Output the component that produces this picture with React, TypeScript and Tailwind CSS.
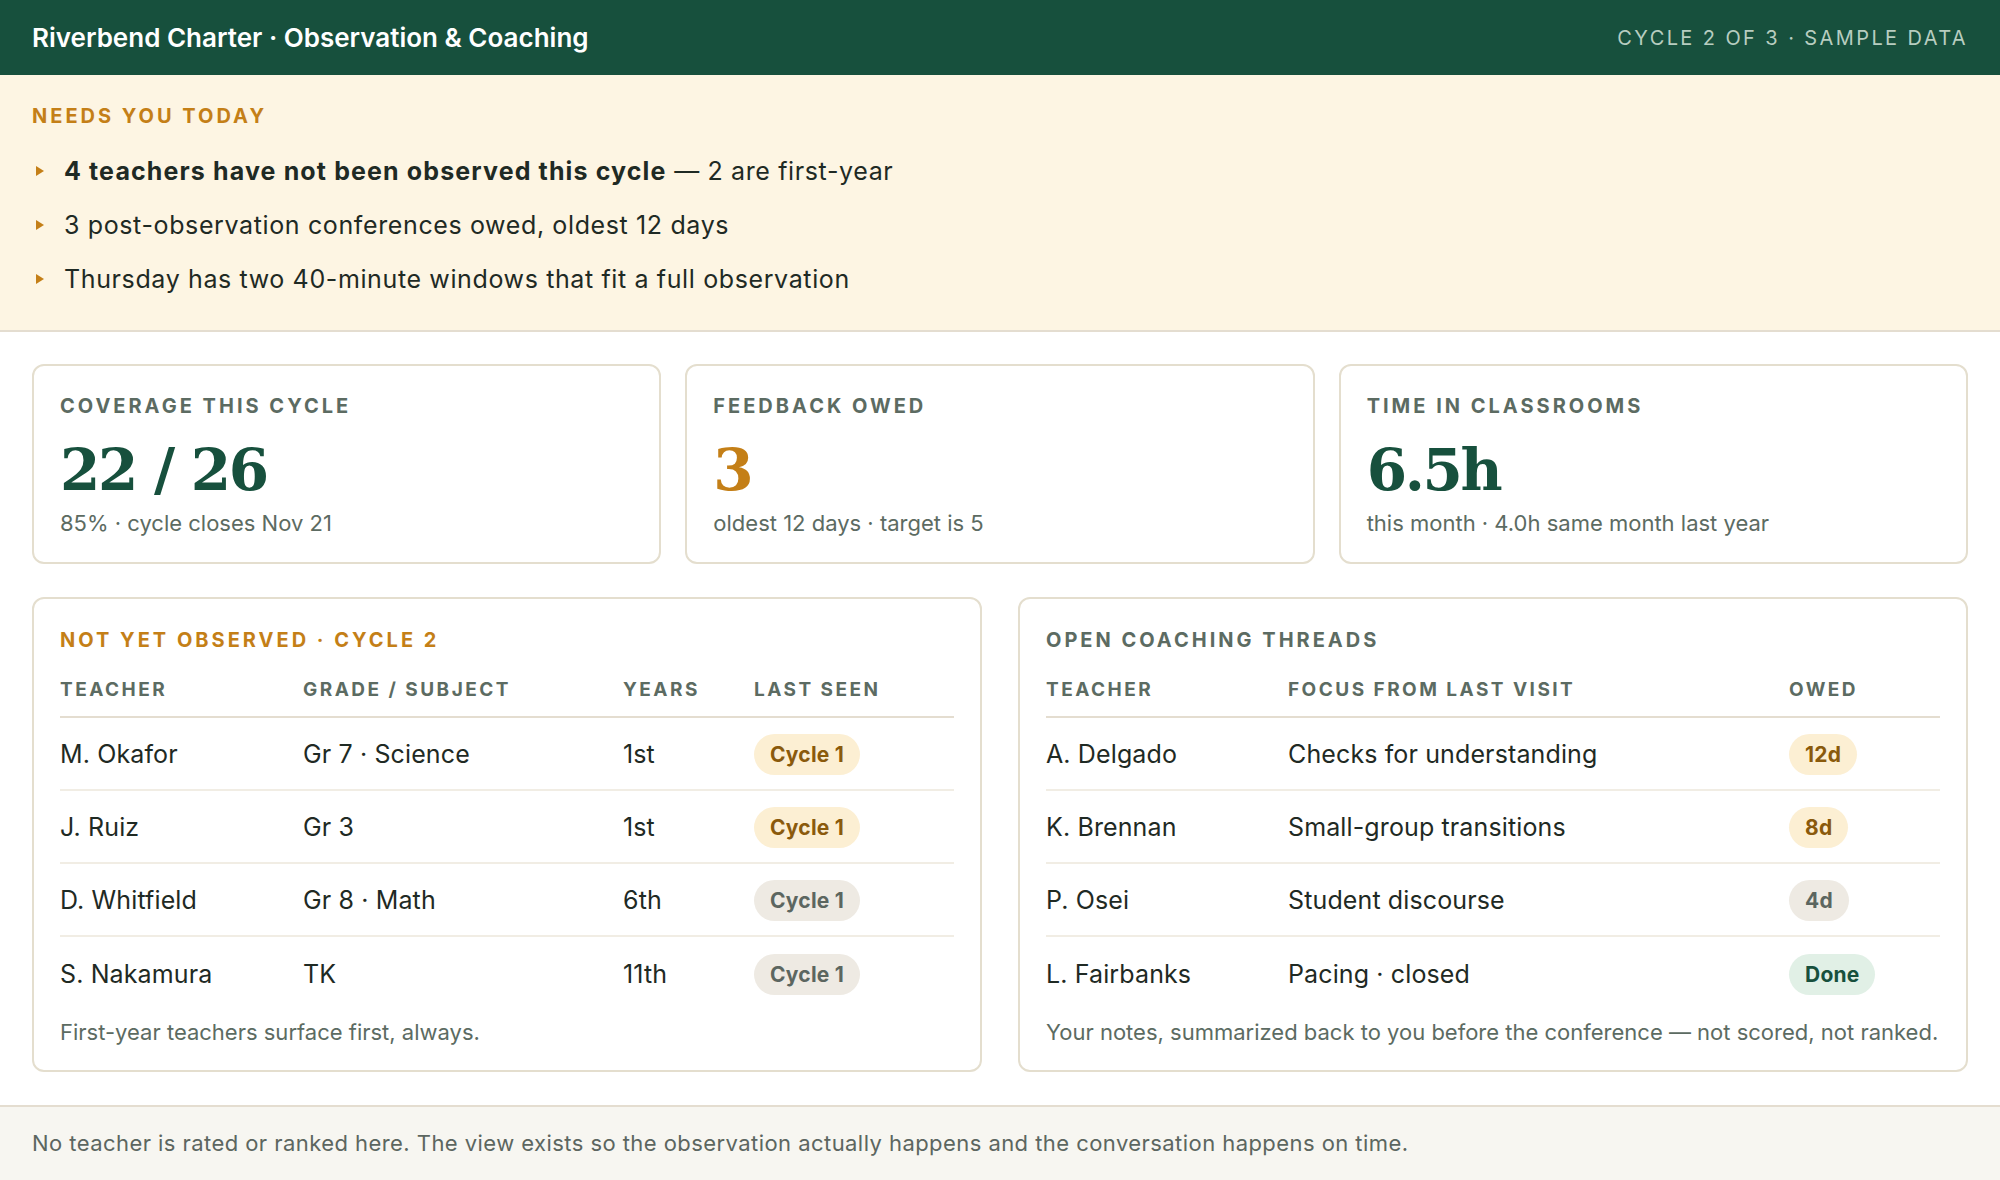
import React from "react";

type Tone = "amber" | "gray" | "green";

const pillTone: Record<Tone, string> = {
  amber: "bg-[#fcefd3] text-[#8a5a0c]",
  gray: "bg-[#eeeae3] text-[#5c6660]",
  green: "bg-[#e1f0e6] text-[#17503d]",
};

function Pill({ tone, children }: { tone: Tone; children: React.ReactNode }) {
  return (
    <span
      className={`inline-flex h-[41px] items-center rounded-full px-[16px] text-[21px] font-bold tracking-[0.01em] ${pillTone[tone]}`}
    >
      {children}
    </span>
  );
}

function Marker() {
  return (
    <span className="flex w-[32px] items-center pl-[4px]">
      <svg width="8" height="10" viewBox="0 0 8 10">
        <polygon points="0,0 8,5 0,10" fill="#c47f17" />
      </svg>
    </span>
  );
}

function StatCard({
  label,
  value,
  valueColor,
  note,
}: {
  label: string;
  value: string;
  valueColor: string;
  note: string;
}) {
  return (
    <div className="flex flex-col rounded-[12px] border-2 border-[#e4dece] bg-white px-[26px] pt-[28px] pb-[25px]">
      <div className="text-[20px] leading-[24px] font-bold tracking-[0.15em] text-[#5c6b62] uppercase">
        {label}
      </div>
      <div
        className={`mt-[20px] text-[58px] leading-[64px] font-bold tracking-[-0.04em] ${valueColor}`}
        style={{ fontFamily: '"DejaVu Serif", "Liberation Serif", serif' }}
      >
        {value}
      </div>
      <div className="mt-[7px] text-[22px] leading-[28px] text-[#5c6b62]">{note}</div>
    </div>
  );
}

const observed = [
  { name: "M. Okafor", grade: "Gr 7 · Science", years: "1st", tone: "amber" as Tone },
  { name: "J. Ruiz", grade: "Gr 3", years: "1st", tone: "amber" as Tone },
  { name: "D. Whitfield", grade: "Gr 8 · Math", years: "6th", tone: "gray" as Tone },
  { name: "S. Nakamura", grade: "TK", years: "11th", tone: "gray" as Tone },
];

const threads = [
  { name: "A. Delgado", focus: "Checks for understanding", owed: "12d", tone: "amber" as Tone },
  { name: "K. Brennan", focus: "Small-group transitions", owed: "8d", tone: "amber" as Tone },
  { name: "P. Osei", focus: "Student discourse", owed: "4d", tone: "gray" as Tone },
  { name: "L. Fairbanks", focus: "Pacing · closed", owed: "Done", tone: "green" as Tone },
];

function TableCard({
  title,
  titleColor,
  cols,
  headers,
  rows,
  note,
}: {
  title: string;
  titleColor: string;
  cols: string;
  headers: string[];
  rows: React.ReactNode[][];
  note: string;
}) {
  return (
    <div className="rounded-[12px] border-2 border-[#e4dece] bg-white px-[26px] pt-[29px] pb-[24px]">
      <div className={`text-[20px] leading-[24px] font-bold tracking-[0.15em] uppercase ${titleColor}`}>
        {title}
      </div>
      <div className={`mt-[26px] grid ${cols} border-b-2 border-[#e4ddd0] pb-[14px]`}>
        {headers.map((h) => (
          <div key={h} className="text-[19px] leading-[24px] font-bold tracking-[0.13em] text-[#5c6b62] uppercase">
            {h}
          </div>
        ))}
      </div>
      {rows.map((cells, i) => (
        <div
          key={i}
          className={`grid ${cols} h-[73px] items-center pt-[2px] text-[25px] tracking-[0.005em] text-[#1f2a24] ${
            i < rows.length - 1 ? "border-b-2 border-[#f1ede4]" : ""
          }`}
        >
          {cells.map((c, j) => (
            <div key={j}>{c}</div>
          ))}
        </div>
      ))}
      <div className="mt-[8px] text-[22px] leading-[28px] text-[#5c6b62]">{note}</div>
    </div>
  );
}

export default function App() {
  return (
    <div
      className="min-h-[1180px] bg-white text-[#1f2a24]"
      style={{ fontFamily: 'Inter, "Noto Sans", "Liberation Sans", sans-serif' }}
    >
      {/* Top bar */}
      <header className="flex h-[75px] items-center justify-between bg-[#17503d] px-8">
        <div className="text-[26px] font-semibold text-white">
          Riverbend Charter · Observation &amp; Coaching
        </div>
        <div className="text-[20px] tracking-[0.12em] text-[#b7cdc0] uppercase">
          Cycle 2 of 3 · Sample data
        </div>
      </header>

      {/* Needs you today */}
      <section className="border-b-2 border-[#e4ddd0] bg-[#fdf5e3] px-8 pt-[29px] pb-[35px]">
        <div className="text-[20px] leading-[24px] font-bold tracking-[0.15em] text-[#c47f17] uppercase">
          Needs you today
        </div>
        <ul className="mt-[27px] flex flex-col gap-[22px] text-[25px] leading-[32px] tracking-[0.025em]">
          <li className="flex items-center">
            <Marker />
            <span>
              <span className="font-bold tracking-[0.045em]">4 teachers have not been observed this cycle</span>{" "}
              — 2 are first-year
            </span>
          </li>
          <li className="flex items-center">
            <Marker />
            <span>3 post-observation conferences owed, oldest 12 days</span>
          </li>
          <li className="flex items-center">
            <Marker />
            <span>Thursday has two 40-minute windows that fit a full observation</span>
          </li>
        </ul>
      </section>

      <main className="px-8 pt-8">
        {/* Stat cards */}
        <div className="grid grid-cols-3 gap-[24px]">
          <StatCard
            label="Coverage this cycle"
            value="22 / 26"
            valueColor="text-[#17503d]"
            note="85% · cycle closes Nov 21"
          />
          <StatCard
            label="Feedback owed"
            value="3"
            valueColor="text-[#c47f17]"
            note="oldest 12 days · target is 5"
          />
          <StatCard
            label="Time in classrooms"
            value="6.5h"
            valueColor="text-[#17503d]"
            note="this month · 4.0h same month last year"
          />
        </div>

        {/* Tables */}
        <div className="mt-[33px] grid grid-cols-2 gap-[36px]">
          <TableCard
            title="Not yet observed · Cycle 2"
            titleColor="text-[#c47f17]"
            cols="grid-cols-[243px_320px_131px_1fr]"
            headers={["Teacher", "Grade / Subject", "Years", "Last seen"]}
            rows={observed.map((r) => [
              r.name,
              r.grade,
              r.years,
              <Pill tone={r.tone}>Cycle 1</Pill>,
            ])}
            note="First-year teachers surface first, always."
          />
          <TableCard
            title="Open coaching threads"
            titleColor="text-[#5c6b62]"
            cols="grid-cols-[242px_501px_1fr]"
            headers={["Teacher", "Focus from last visit", "Owed"]}
            rows={threads.map((r) => [r.name, r.focus, <Pill tone={r.tone}>{r.owed}</Pill>])}
            note="Your notes, summarized back to you before the conference — not scored, not ranked."
          />
        </div>
      </main>

      {/* Footer */}
      <footer className="mt-[33px] flex h-[75px] items-center border-t-2 border-[#e4ddd0] bg-[#f7f6f1] px-8 text-[22px] tracking-[0.02em] text-[#5c6660]">
        No teacher is rated or ranked here. The view exists so the observation actually happens and the
        conversation happens on time.
      </footer>
    </div>
  );
}
